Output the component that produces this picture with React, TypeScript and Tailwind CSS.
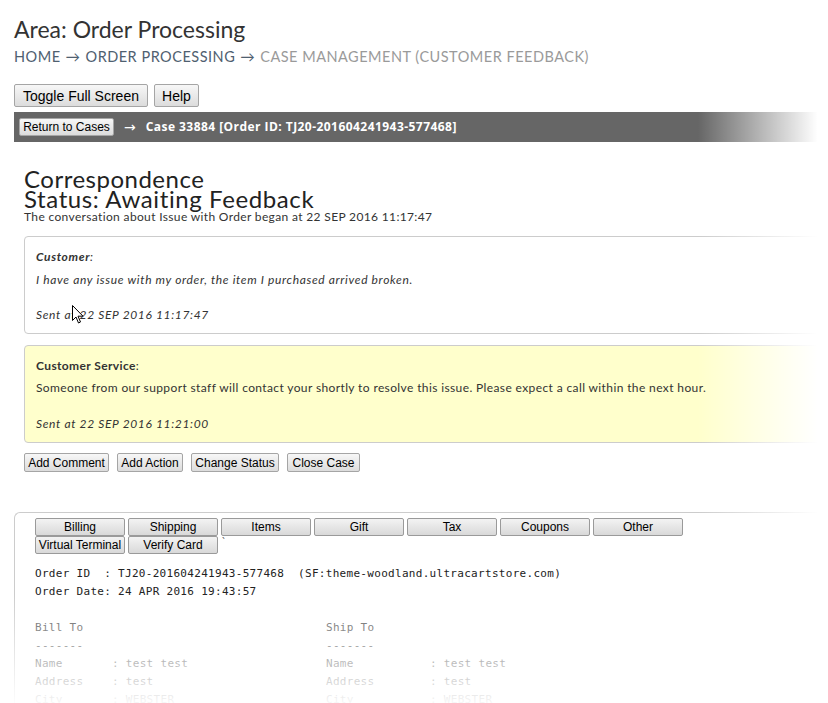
import React from "react";

const btn =
  "bg-gradient-to-b from-[#f7f7f7] to-[#dcdcdc] border border-[#a5a5a5] rounded-[2px] text-black leading-none";

function ClassicButton({ children, className = "" }: { children: React.ReactNode; className?: string }) {
  return (
    <button
      className={`${btn} ${className}`}
      style={{ fontFamily: '"Liberation Sans", Arial, sans-serif' }}
    >
      {children}
    </button>
  );
}

function Tab({ children }: { children: React.ReactNode }) {
  return (
    <button
      className="w-[90px] h-[18px] bg-gradient-to-b from-[#f3f3f3] to-[#d9d9d9] border border-[#9a9a9a] rounded-[2px] text-[12px] leading-none text-black"
      style={{ fontFamily: '"Liberation Sans", Arial, sans-serif' }}
    >
      {children}
    </button>
  );
}

export default function App() {
  const lato = { fontFamily: 'Lato, "Open Sans", sans-serif' };
  const mono = { fontFamily: '"DejaVu Sans Mono", "Liberation Mono", monospace' };
  return (
    <div className="relative w-[828px] h-[703px] overflow-hidden bg-white text-[#333]">
      {/* Header */}
      <div className="pl-[14px] pt-[14px]" style={lato}>
        <h1 className="text-[23px] leading-[30px] text-[#333]">Area: Order Processing</h1>
        <div className="mt-[4px] text-[14.5px] leading-[18px] tracking-[0.5px] uppercase flex gap-[5px]">
          <span className="text-[#4f6070]">Home</span>
          <span className="text-[#4f6070]">→</span>
          <span className="text-[#4f6070]">Order Processing</span>
          <span className="text-[#4f6070]">→</span>
          <span className="text-[#9a9a9a]">Case Management (Customer Feedback)</span>
        </div>
        <div className="mt-[18px] flex gap-[6px]">
          <ClassicButton className="h-[23px] w-[134px] text-[14px]">Toggle Full Screen</ClassicButton>
          <ClassicButton className="h-[23px] w-[45px] text-[14px]">Help</ClassicButton>
        </div>
      </div>

      {/* Dark case bar */}
      <div className="ml-[14px] mt-[5px] h-[30px] bg-[#666666] flex items-center pl-[5px]">
        <ClassicButton className="h-[18px] w-[95px] text-[12px]">Return to Cases</ClassicButton>
        <span className="ml-[10px] text-white text-[14px] leading-none" style={{ fontFamily: '"DejaVu Sans", sans-serif' }}>
          →
        </span>
        <span
          className="ml-[10px] text-white text-[12px] font-bold tracking-[0.45px]"
          style={{ fontFamily: '"Open Sans", sans-serif' }}
        >
          Case 33884 [Order ID: TJ20-201604241943-577468]
        </span>
      </div>

      {/* Correspondence */}
      <div className="pl-[24px] mt-[28px]" style={lato}>
        <div className="text-[24px] leading-[18px] tracking-[0.5px] text-[#222]">Correspondence</div>
        <div className="text-[24px] leading-[18px] tracking-[0.6px] text-[#222] mt-[2px]">Status: Awaiting Feedback</div>
        <div className="text-[12px] leading-[14px] tracking-[0.35px] text-[#333] mt-[2px]">
          The conversation about Issue with Order began at 22 SEP 2016 11:17:47
        </div>

        <div className="mt-[12px] mr-[-20px] h-[98px] border border-[#cccccc] rounded-[4px] pl-[11px] pt-[11px] text-[12px] tracking-[0.65px] text-[#333] italic">
          <div className="leading-[18px]">
            <span className="font-bold">Customer</span>:
          </div>
          <div className="leading-[18px] mt-[5px]">
            I have any issue with my order, the item I purchased arrived broken.
          </div>
          <div className="leading-[18px] mt-[17px]">Sent at 22 SEP 2016 11:17:47</div>
        </div>

        <div className="mt-[11px] mr-[-20px] h-[98px] border border-[#cccccc] rounded-[4px] bg-[#ffffcc] pl-[11px] pt-[11px] text-[12px] tracking-[0.38px] text-[#333]">
          <div className="leading-[18px]">
            <span className="font-bold">Customer Service</span>:
          </div>
          <div className="leading-[18px] mt-[4px]">
            Someone from our support staff will contact your shortly to resolve this issue. Please expect a call within the next hour.
          </div>
          <div className="leading-[18px] mt-[18px] italic tracking-[0.65px]">Sent at 22 SEP 2016 11:21:00</div>
        </div>

        <div className="mt-[10px] flex gap-[8px]">
          <ClassicButton className="h-[19px] w-[85px] text-[12px]">Add Comment</ClassicButton>
          <ClassicButton className="h-[19px] w-[66px] text-[12px]">Add Action</ClassicButton>
          <ClassicButton className="h-[19px] w-[88px] text-[12px]">Change Status</ClassicButton>
          <ClassicButton className="h-[19px] w-[73px] text-[12px]">Close Case</ClassicButton>
        </div>
      </div>

      {/* Order panel */}
      <div className="ml-[14px] mt-[40px] mr-[-20px] border-l border-t border-[#cccccc] rounded-tl-[6px] pl-[20px] pt-[5px] h-[300px]">
        <div className="flex flex-wrap gap-x-[3px] w-[660px]">
          <Tab>Billing</Tab>
          <Tab>Shipping</Tab>
          <Tab>Items</Tab>
          <Tab>Gift</Tab>
          <Tab>Tax</Tab>
          <Tab>Coupons</Tab>
          <Tab>Other</Tab>
        </div>
        <div className="flex gap-x-[3px] items-start">
          <Tab>Virtual Terminal</Tab>
          <Tab>Verify Card</Tab>
          <span className="text-[10px] leading-[10px] text-[#666] ml-[1px] mt-[1px]">`</span>
        </div>

        <div className="mt-[11px] text-[11px] leading-[18px] tracking-[0.3px] text-[#222] whitespace-pre" style={mono}>
          <div>Order ID  : TJ20-201604241943-577468  (SF:theme-woodland.ultracartstore.com)</div>
          <div>Order Date: 24 APR 2016 19:43:57</div>
          <div>&nbsp;</div>
          <div className="flex text-[#555]">
            <div className="w-[291px]">
              <div>Bill To</div>
              <div>-------</div>
              <div className="flex"><span className="w-[77px]">Name</span><span>: test test</span></div>
              <div className="flex"><span className="w-[77px]">Address</span><span>: test</span></div>
              <div className="flex"><span className="w-[77px]">City</span><span>: WEBSTER</span></div>
            </div>
            <div>
              <div>Ship To</div>
              <div>-------</div>
              <div className="flex"><span className="w-[104px]">Name</span><span>: test test</span></div>
              <div className="flex"><span className="w-[104px]">Address</span><span>: test</span></div>
              <div className="flex"><span className="w-[104px]">City</span><span>: WEBSTER</span></div>
            </div>
          </div>
        </div>
      </div>

      {/* Edge fades */}
      <div className="pointer-events-none absolute top-0 right-0 h-full w-[130px] bg-gradient-to-r from-transparent to-white to-[92%]" />
      <div className="pointer-events-none absolute bottom-0 left-0 w-full h-[110px] bg-gradient-to-b from-transparent to-white/95" />

      {/* Mouse cursor */}
      <svg className="absolute left-[72px] top-[305px]" width="12" height="19" viewBox="0 0 12 19">
        <path d="M0.5 0.5 L0.5 15.5 L4 12 L6.5 18 L8.5 17 L6 11.2 L11 11.2 Z" fill="white" stroke="black" strokeWidth="1" strokeLinejoin="round" />
      </svg>
    </div>
  );
}
